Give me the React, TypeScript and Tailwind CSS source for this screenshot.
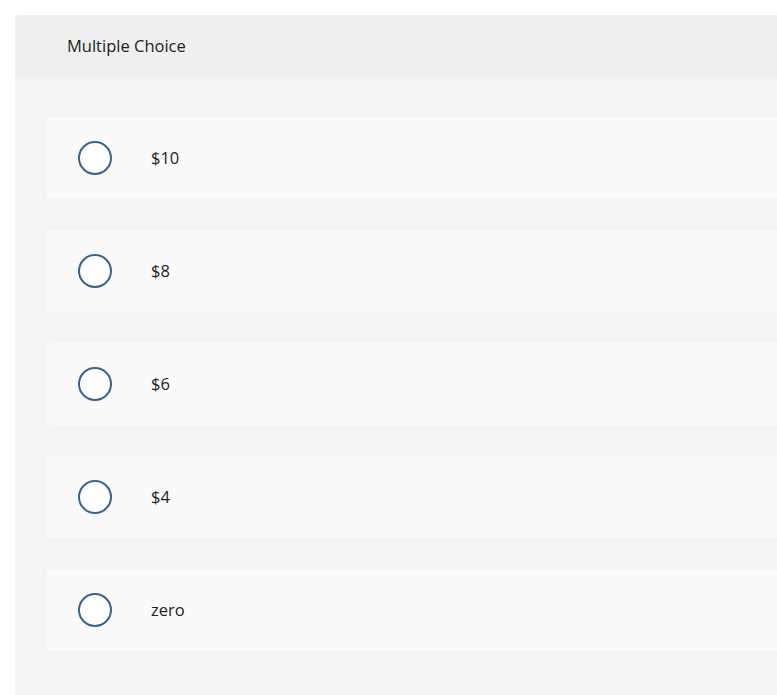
import React from "react";

const options = ["$10", "$8", "$6", "$4", "zero"];

export default function App() {
  return (
    <div className="min-h-[695px] bg-white pt-[15px] pl-[15px] overflow-hidden" style={{ fontFamily: "'Open Sans', sans-serif" }}>
      <div className="w-[800px] rounded-tl-[3px] bg-[#f4f4f4] min-h-[680px]">
        <div className="h-[62px] bg-[#efefef] rounded-tl-[3px] flex items-center pl-[52px] text-[16.5px] text-[#222]">
          Multiple Choice
        </div>
        <div className="pl-[32px] pt-[40px] flex flex-col gap-[31px]">
          {options.map((o) => (
            <div key={o} className="h-[82px] bg-[#fafafa] rounded-l-[4px] flex items-center pl-[31px]">
              <div className="w-[34px] h-[34px] rounded-full border-2 border-[#36628f] bg-white" />
              <div className="ml-[39px] pt-[1px] text-[16.5px] text-[#222]">{o}</div>
            </div>
          ))}
        </div>
      </div>
    </div>
  );
}
